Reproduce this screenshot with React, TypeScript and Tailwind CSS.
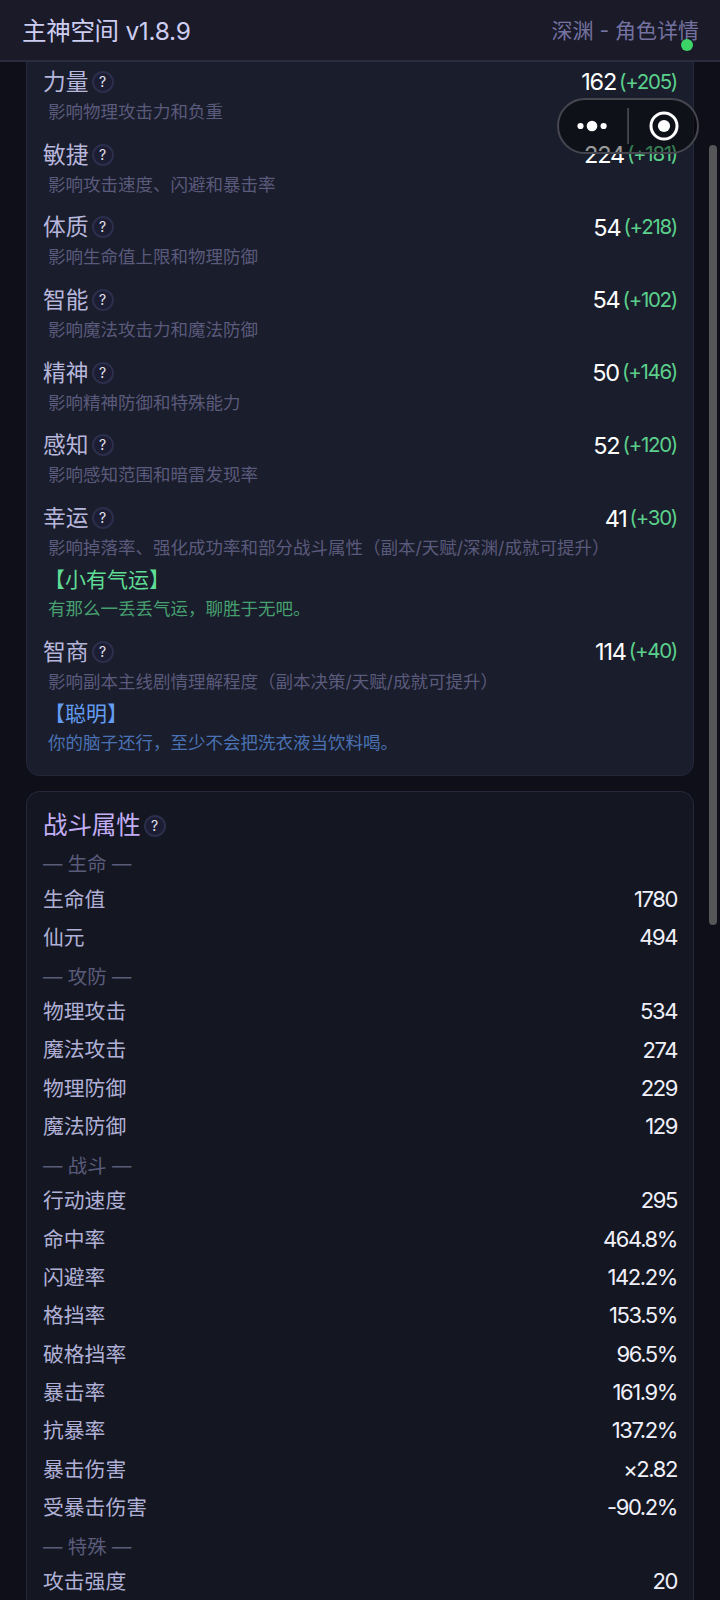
import type { ReactNode } from 'react';

type Attribute = {
  name: string;
  value: string;
  bonus: string;
  desc: string;
  trait?: { title: string; text: string; titleColor: string; textColor: string };
};

const ATTRIBUTES: Attribute[] = [
  { name: '力量', value: '162', bonus: '(+205)', desc: '影响物理攻击力和负重' },
  { name: '敏捷', value: '224', bonus: '(+181)', desc: '影响攻击速度、闪避和暴击率' },
  { name: '体质', value: '54', bonus: '(+218)', desc: '影响生命值上限和物理防御' },
  { name: '智能', value: '54', bonus: '(+102)', desc: '影响魔法攻击力和魔法防御' },
  { name: '精神', value: '50', bonus: '(+146)', desc: '影响精神防御和特殊能力' },
  { name: '感知', value: '52', bonus: '(+120)', desc: '影响感知范围和暗雷发现率' },
  {
    name: '幸运',
    value: '41',
    bonus: '(+30)',
    desc: '影响掉落率、强化成功率和部分战斗属性（副本/天赋/深渊/成就可提升）',
    trait: {
      title: '【小有气运】',
      text: '有那么一丢丢气运，聊胜于无吧。',
      titleColor: 'text-[#5fdc95]',
      textColor: 'text-[#46a070]',
    },
  },
  {
    name: '智商',
    value: '114',
    bonus: '(+40)',
    desc: '影响副本主线剧情理解程度（副本决策/天赋/成就可提升）',
    trait: {
      title: '【聪明】',
      text: '你的脑子还行，至少不会把洗衣液当饮料喝。',
      titleColor: 'text-[#639cf2]',
      textColor: 'text-[#4a72b4]',
    },
  },
];

const COMBAT = [
  { section: '生命', rows: [['生命值', '1780'], ['仙元', '494']] },
  {
    section: '攻防',
    rows: [['物理攻击', '534'], ['魔法攻击', '274'], ['物理防御', '229'], ['魔法防御', '129']],
  },
  {
    section: '战斗',
    rows: [
      ['行动速度', '295'],
      ['命中率', '464.8%'],
      ['闪避率', '142.2%'],
      ['格挡率', '153.5%'],
      ['破格挡率', '96.5%'],
      ['暴击率', '161.9%'],
      ['抗暴率', '137.2%'],
      ['暴击伤害', '×2.82'],
      ['受暴击伤害', '-90.2%'],
    ],
  },
  { section: '特殊', rows: [['攻击强度', '20']] },
];

function HelpBadge() {
  return (
    <span className="grid h-[22px] w-[22px] shrink-0 place-items-center rounded-full border-2 border-[#2b2f4c] bg-[#1c1d33] text-[14px] leading-none text-[#e4e4ee]">
      ?
    </span>
  );
}

function Card({ className, children }: { className: string; children: ReactNode }) {
  return <section className={`mx-[26px] border-[#25273a] px-4 ${className}`}>{children}</section>;
}

function AttributeRow({ item }: { item: Attribute }) {
  return (
    <div>
      <div className="flex h-8 items-center justify-between">
        <div className="flex items-center gap-[3px] text-[22.75px] text-[#b7b6dc]">
          {item.name}
          <HelpBadge />
        </div>
        <div className="flex items-center gap-[3px]">
          <span className="text-[23.5px] tracking-[-1.2px] text-white">{item.value}</span>
          <span className="text-[20.5px] tracking-[-1.3px] text-[#5bd08c]">{item.bonus}</span>
        </div>
      </div>
      <p className="mt-px h-[25px] pl-[5px] text-[17.5px] leading-[26px] text-[#5a5a7c]">{item.desc}</p>
      {item.trait && (
        <div className="pt-[5px] pl-[5px]">
          <p className={`-ml-1 h-[30px] text-[21px] leading-[30px] ${item.trait.titleColor}`}>{item.trait.title}</p>
          <p className={`mt-px h-[25px] text-[17.5px] leading-[25px] ${item.trait.textColor}`}>{item.trait.text}</p>
        </div>
      )}
    </div>
  );
}

// floating mini-program menu in the top right corner
function Capsule() {
  return (
    <div className="absolute top-[98px] left-[557px] flex h-[56px] w-[142px] items-center rounded-full border-2 border-[#45464f] bg-black/40">
      <svg width="138" height="52" viewBox="0 0 138 52" fill="white">
        <circle cx="21.5" cy="26" r="3.1" />
        <circle cx="33" cy="26" r="5.3" />
        <circle cx="44.6" cy="26" r="3.1" />
        <rect x="68.2" y="8" width="1.8" height="36" fill="#45464f" />
        <circle cx="105" cy="26" r="13" fill="none" stroke="white" strokeWidth="3" />
        <circle cx="105" cy="26" r="6.1" />
      </svg>
    </div>
  );
}

export default function App() {
  return (
    <div className="relative h-[1600px] w-[720px] overflow-hidden bg-[#0f0f19] font-['Inter','Noto_Sans_CJK_SC',sans-serif]">
      <header className="flex h-[62px] items-center justify-between border-b-2 border-[#2a2b3f] bg-[#1a1a28] pt-[2px] pr-[21px] pl-[22px]">
        <h1 className="text-[24.5px] tracking-[-0.3px] text-[#cdcdf2]">主神空间 v1.8.9</h1>
        <span className="text-[21px] text-[#7472a0]">深渊 - 角色详情</span>
      </header>

      <main>
        <Card className="h-[714px] rounded-b-[14px] border-x border-b bg-[#1a1d2b] pt-[4px]">
          <div className="flex flex-col gap-[14.7px]">
            {ATTRIBUTES.map((item) => (
              <AttributeRow key={item.name} item={item} />
            ))}
          </div>
        </Card>

        <Card className="mt-[15px] h-[840px] rounded-t-[14px] border-x border-t bg-[#141722] pt-[15.5px]">
          <h2 className="flex h-9 items-center gap-[3px] text-[24.5px] tracking-[-0.1px] text-[#c3aef5]">
            战斗属性
            <HelpBadge />
          </h2>
          <div className="pt-px">
            {COMBAT.map(({ section, rows }) => (
              <div key={section}>
                <div className="flex h-[35.7px] items-center pt-[5px] text-[19.4px] text-[#5a5b7a]">
                  — {section} —
                </div>
                {rows.map(([label, value]) => (
                  <div key={label} className="flex h-[38.35px] items-center justify-between">
                    <span className="text-[20.8px] text-[#b0b0d6]">{label}</span>
                    <span className="text-[22px] tracking-[-1.4px] text-[#f0f0fa]">{value}</span>
                  </div>
                ))}
              </div>
            ))}
          </div>
        </Card>
      </main>

      <span className="absolute top-[39px] left-[681px] h-3 w-3 rounded-full bg-[#3dd568]" />
      <Capsule />
      <div className="absolute top-[145px] left-[709px] h-[780px] w-2 rounded-full bg-[#565658]" />
    </div>
  );
}
